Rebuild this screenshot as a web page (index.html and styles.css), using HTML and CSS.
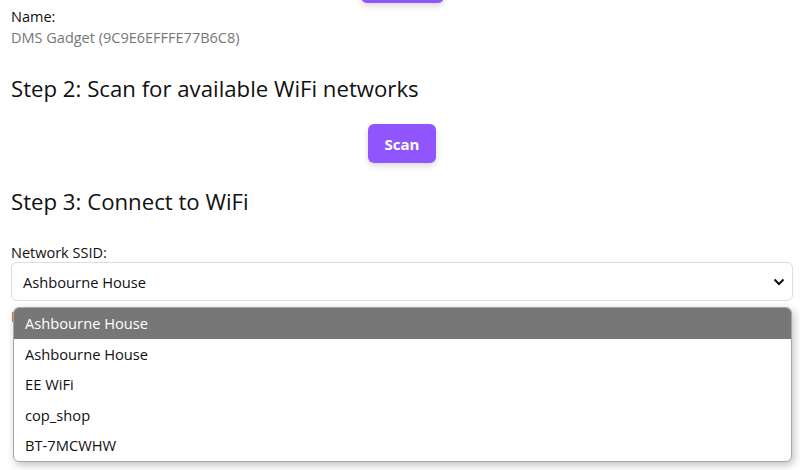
FILE: index.html
```html
<!DOCTYPE html>
<html>
<head>
<meta charset="utf-8">
<link rel="stylesheet" href="styles.css">
</head>
<body>
<div class="page">
  <div class="btn-row top"><button class="btn">Next</button></div>
  <div class="field">
    <div class="label">Name:</div>
    <div class="value">DMS Gadget (9C9E6EFFFE77B6C8)</div>
  </div>
  <h2 class="step">Step 2: Scan for available WiFi networks</h2>
  <div class="btn-row"><button class="btn">Scan</button></div>
  <h2 class="step">Step 3: Connect to WiFi</h2>
  <div class="field ssid">
    <div class="label">Network SSID:</div>
    <div class="select">
      <span>Ashbourne House</span>
      <svg class="chev" width="12" height="8" viewBox="0 0 12 8"><path d="M1.5 1.5 L6 6 L10.5 1.5" fill="none" stroke="#111" stroke-width="2"/></svg>
    </div>
    <div class="error">Please select a network</div>
    <ul class="menu">
      <li class="active">Ashbourne House</li>
      <li>Ashbourne House</li>
      <li>EE WiFi</li>
      <li>cop_shop</li>
      <li>BT-7MCWHW</li>
    </ul>
  </div>
</div>
</body>
</html>
```

FILE: styles.css
```css
html, body {
  margin: 0;
  padding: 0;
  background: #fff;
}
body {
  font-family: "Open Sans", "Noto Sans", sans-serif;
  color: #111;
  min-height: 470px;
}
.page {
  padding: 0 7px 0 11px;
}
.btn-row {
  display: flex;
  justify-content: center;
}
.btn-row.top {
  margin-top: -36px;
}
.btn {
  background: #9155fd;
  color: #fff;
  border: none;
  border-radius: 6px;
  font-family: inherit;
  font-weight: 700;
  font-size: 15px;
  height: 39px;
  padding: 0 17px;
  box-shadow: 0 3px 6px rgba(0,0,0,0.15);
}
.btn-row.top .btn {
  width: 83px;
}
.field {
  margin-top: 3px;
}
.label {
  font-size: 14.5px;
  line-height: 21px;
}
.value {
  font-size: 14.5px;
  line-height: 22px;
  color: #777;
}
.step {
  font-weight: 400;
  font-size: 22.2px;
  line-height: 32px;
  margin: 24px 0 19px;
}
.btn-row + .step {
  margin-top: 23px;
}
.ssid {
  position: relative;
  margin-top: 25px;
}
.ssid .label {
  line-height: 19px;
}
.select {
  margin-top: 0;
  height: 39px;
  box-sizing: border-box;
  border: 1px solid #dcdce0;
  border-radius: 6px;
  display: flex;
  align-items: center;
  justify-content: space-between;
  padding: 0 7px 0 11px;
  font-size: 14.7px;
}
.error {
  color: #a8321f;
  font-size: 14px;
  margin-top: 6px;
}
.menu {
  position: absolute;
  left: 2px;
  right: 1px;
  top: 64px;
  margin: 0;
  padding: 0;
  list-style: none;
  background: #fff;
  border: 1px solid #a8a8a8;
  border-radius: 6px;
  overflow: hidden;
  box-shadow: 2px 3px 8px rgba(0,0,0,0.25);
}
.menu li {
  height: 30.5px;
  line-height: 31px;
  padding-left: 11px;
  font-size: 14.7px;
  color: #111;
}
.menu li.active {
  background: #777;
  color: #fff;
}
```
